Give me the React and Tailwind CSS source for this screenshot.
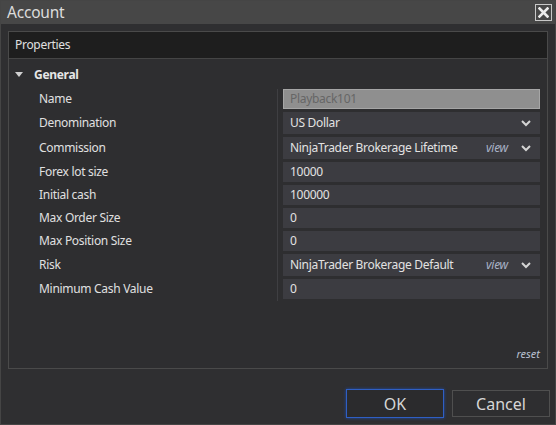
import React from 'react';

const font = { fontFamily: '"Noto Sans", "Open Sans", sans-serif' };

const rows = [
  { label: 'Name', value: 'Playback101', kind: 'disabled' },
  { label: 'Denomination', value: 'US Dollar', kind: 'combo' },
  { label: 'Commission', value: 'NinjaTrader Brokerage Lifetime', kind: 'combo', view: true },
  { label: 'Forex lot size', value: '10000', kind: 'text' },
  { label: 'Initial cash', value: '100000', kind: 'text' },
  { label: 'Max Order Size', value: '0', kind: 'text' },
  { label: 'Max Position Size', value: '0', kind: 'text' },
  { label: 'Risk', value: 'NinjaTrader Brokerage Default', kind: 'combo', view: true },
  { label: 'Minimum Cash Value', value: '0', kind: 'text' },
];

const Chevron = () => (
  <svg width="10" height="7" viewBox="0 0 10 7" className="shrink-0">
    <polyline points="1,1 5,5 9,1" fill="none" stroke="#d4d4d4" strokeWidth="2" />
  </svg>
);

const Field = ({ row }) => {
  if (row.kind === 'disabled') {
    return (
      <div className="h-[20px] bg-[#8f8f8f] border border-[#a6a6a6] flex items-center pl-[6px] text-[12px] tracking-[-0.3px] text-[#666666]">
        {row.value}
      </div>
    );
  }
  if (row.kind === 'combo') {
    return (
      <div className="h-[22px] bg-[#3c3c41] flex items-center pl-[7px] pr-[9px] text-[12px] tracking-[-0.3px] text-[#e2e2e2]">
        <span className="flex-1">{row.value}</span>
        {row.view && <span className="italic text-[12px] text-[#a9b2c6] mr-[13px]">view</span>}
        <Chevron />
      </div>
    );
  }
  return (
    <div className="h-[20px] bg-[#3c3c41] flex items-center pl-[7px] text-[12px] tracking-[-0.3px] text-[#e2e2e2]">
      {row.value}
    </div>
  );
};

export default function App() {
  return (
    <div style={font} className="w-[556px] h-[425px] bg-[#2f2f31] border border-[#454545] flex flex-col">
      <div className="h-[23px] bg-[#474747] flex items-center justify-between pl-[6px] pr-[3px] shrink-0">
        <span className="text-[15.5px] text-[#dcdcdc] leading-none tracking-[-0.2px]">Account</span>
        <div className="w-[17px] h-[17px] border border-[#c8c8c8] flex items-center justify-center">
          <svg width="11" height="11" viewBox="0 0 11 11">
            <path d="M1.5 1.5 L9.5 9.5 M9.5 1.5 L1.5 9.5" stroke="#ececec" strokeWidth="2.6" strokeLinecap="square" />
          </svg>
        </div>
      </div>

      <div className="px-[7px] pt-[7px]">
        <div className="h-[338px] border border-[#4a4a4a] bg-[#2e2e30] flex flex-col">
          <div className="h-[27px] bg-[#1e1e1e] border-b border-[#454545] flex items-center pl-[6px] text-[12px] tracking-[-0.3px] text-[#e0e0e0]">
            Properties
          </div>
          <div className="h-[28px] flex items-center pl-[6px] pt-[3px] gap-[11px]">
            <svg width="8" height="5" viewBox="0 0 8 5">
              <polygon points="0,0 8,0 4,5" fill="#d0d0d0" />
            </svg>
            <span className="text-[12px] font-bold tracking-[-0.3px] text-[#e6e6e6]">General</span>
          </div>
          <div className="flex pt-[2px]">
            <div className="w-[269px] border-r border-[#3f3f42] flex flex-col gap-[3px] pb-[2px]">
              {rows.map((r) => (
                <div
                  key={r.label}
                  className={`${r.kind === 'combo' ? 'h-[22px]' : 'h-[20px]'} flex items-center pl-[30px] text-[12px] tracking-[-0.3px] text-[#e0e0e0]`}
                >
                  {r.label}
                </div>
              ))}
            </div>
            <div className="w-[257px] ml-[5px] flex flex-col gap-[3px]">
              {rows.map((r) => (
                <Field key={r.label} row={r} />
              ))}
            </div>
          </div>
          <div className="flex-1 flex items-end justify-end pr-[7px] pb-[6px]">
            <span className="italic text-[11px] text-[#b8c0d0]">reset</span>
          </div>
        </div>
      </div>

      <div className="flex justify-end gap-[8px] pr-[5px] pt-[20px]">
        <button className="w-[98px] h-[29px] bg-[#2b2b2d] border border-[#2f5fc4] shadow-[0_0_3px_#1d4aa8] text-[16px] text-[#d6d6d6]">
          OK
        </button>
        <button className="w-[98px] h-[27px] mt-[1px] bg-[#2e2e30] border border-[#4f4f4f] text-[16px] text-[#d6d6d6]">
          Cancel
        </button>
      </div>
    </div>
  );
}
